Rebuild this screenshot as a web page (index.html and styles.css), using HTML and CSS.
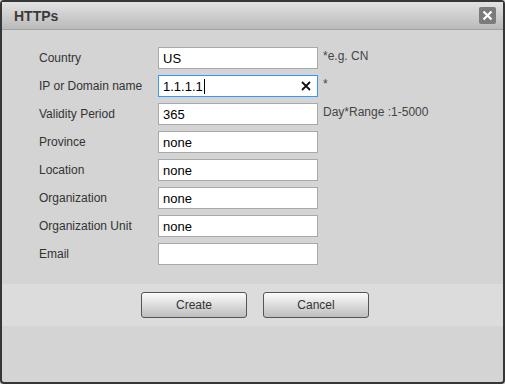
FILE: index.html
```html
<!DOCTYPE html>
<html>
<head>
  <meta charset="UTF-8">
  <title>HTTPs</title>
  <link rel="stylesheet" href="styles.css">
</head>
<body>
  <div class="dialog">
    <div class="titlebar">
      <span class="title">HTTPs</span>
      <span class="close">
        <svg width="11" height="11" viewBox="0 0 11 11"><path d="M1.5 1.5 L9.5 9.5 M9.5 1.5 L1.5 9.5" stroke="#fff" stroke-width="2.2"/></svg>
      </span>
    </div>

    <!-- Certificate fields -->
    <form class="fields">
      <label>Country</label>
      <input type="text" value="US">
      <span class="hint">*e.g. CN</span>

      <label>IP or Domain name</label>
      <div class="field focus">
        <span>1.1.1.1</span><span class="caret"></span>
        <svg class="clear" width="10" height="10" viewBox="0 0 10 10"><path d="M1 1 L9 9 M9 1 L1 9" stroke="#111" stroke-width="1.8"/></svg>
      </div>
      <span class="hint">*</span>

      <label>Validity Period</label>
      <input type="text" value="365">
      <span class="hint">Day*Range :1-5000</span>

      <label>Province</label>
      <input type="text" value="none">
      <span></span>

      <label>Location</label>
      <input type="text" value="none">
      <span></span>

      <label>Organization</label>
      <input type="text" value="none">
      <span></span>

      <label>Organization Unit</label>
      <input type="text" value="none">
      <span></span>

      <label>Email</label>
      <input type="text" value="">
      <span></span>
    </form>

    <div class="buttons">
      <button type="button">Create</button>
      <button type="button">Cancel</button>
    </div>
  </div>
</body>
</html>
```

FILE: styles.css
```css
body { margin: 0; font-family: "Liberation Sans", Arial, sans-serif; background: #d4d4d4; }
.dialog { width: 505px; height: 384px; box-sizing: border-box; border: 2px solid #363636; border-radius: 4px; background: #d4d4d4; display: flex; flex-direction: column; }
.titlebar { height: 27px; flex: none; border-bottom: 1px solid #a2a2a2; background: linear-gradient(#e2e2e2, #bababa); display: flex; align-items: center; justify-content: space-between; padding: 0 7px 0 12px; }
.title { font-size: 14px; font-weight: bold; color: #3a3a3a; }
.close { width: 17px; height: 17px; background: #7b7b7b; border-radius: 2px; display: flex; align-items: center; justify-content: center; }
.fields { display: grid; grid-template-columns: 119px 160px auto; grid-auto-rows: 22px; row-gap: 6px; padding: 17px 0 0 37px; margin: 0; }
.fields label { font-size: 12px; color: #333; align-self: center; }
.fields input, .field { box-sizing: border-box; width: 160px; height: 22px; margin: 0; padding: 0 4px; border: 1px solid #a9a9a9; background: #fff; font-family: "Liberation Sans", Arial, sans-serif; font-size: 13px; color: #000; outline: none; }
.field { display: flex; align-items: center; position: relative; }
.field.focus { border-color: #3399ff; }
.caret { width: 1px; height: 15px; background: #000; margin-left: 1px; }
.clear { position: absolute; right: 6px; top: 5px; }
.hint { font-size: 12px; color: #444; margin: 2px 0 0 5px; white-space: nowrap; }
.buttons { margin-top: 19px; height: 42px; background: #dcdcdc; display: flex; align-items: center; justify-content: center; gap: 16px; padding-left: 5px; }
.buttons button { width: 106px; height: 26px; border: 1px solid #555; border-radius: 3px; background: linear-gradient(#fbfbfb, #bdbdbd); font-family: "Liberation Sans", Arial, sans-serif; font-size: 12px; color: #333; cursor: pointer; }
```
